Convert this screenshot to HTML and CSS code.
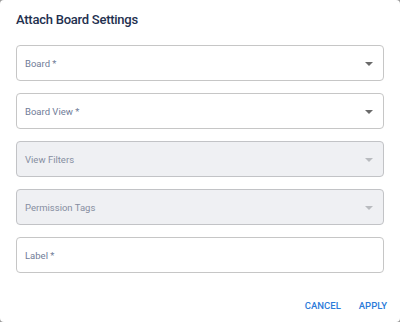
FILE: index.html
```html
<!DOCTYPE html>
<html lang="en">
<head>
  <meta charset="UTF-8">
  <meta name="viewport" content="width=device-width, initial-scale=1.0">
  <title>Attach Board Settings</title>
  <link rel="stylesheet" href="styles.css">
</head>
<body>
  <div class="dialog">
    <h2 class="title">Attach Board Settings</h2>

    <div class="fields">
      <div class="field">
        <span class="label">Board *</span>
        <span class="arrow"></span>
      </div>
      <div class="field">
        <span class="label">Board View *</span>
        <span class="arrow"></span>
      </div>
      <div class="field disabled">
        <span class="label">View Filters</span>
        <span class="arrow"></span>
      </div>
      <div class="field disabled">
        <span class="label">Permission Tags</span>
        <span class="arrow"></span>
      </div>
      <div class="field">
        <span class="label">Label *</span>
      </div>
    </div>

    <div class="actions">
      <button class="button">CANCEL</button>
      <button class="button">APPLY</button>
    </div>
  </div>
</body>
</html>
```

FILE: styles.css
```css
html, body { margin: 0; height: 100%; }
body { background: #9a9a9a; font-family: Roboto, "Liberation Sans", sans-serif; }
.dialog { box-sizing: border-box; width: 400px; height: 322px; background: #fff; border-radius: 4px; padding: 10px 16px 0; }
.title { margin: 0 0 15px; font-size: 13px; line-height: 20px; font-weight: 500; letter-spacing: -0.25px; color: #23304f; }
.fields { display: flex; flex-direction: column; gap: 12px; }
.field { box-sizing: border-box; height: 36px; border: 1px solid #c6c6c6; border-radius: 4px; display: flex; align-items: center; justify-content: space-between; padding: 0 10px 0 8px; }
.field.disabled { background: #eff0f3; border-color: #c2c3c6; }
.label { font-size: 9.5px; color: #707c97; }
.field.disabled .label { color: #868ea1; }
.arrow { width: 0; height: 0; border-left: 4px solid transparent; border-right: 4px solid transparent; border-top: 4px solid #6a6a6a; margin-top: 1px; }
.field.disabled .arrow { border-top-color: #b9bbbf; }
.actions { display: flex; justify-content: flex-end; gap: 18px; margin-top: 25px; margin-right: -3px; }
.button { background: none; border: none; padding: 0; font-family: inherit; font-size: 9.5px; font-weight: 500; line-height: 16px; color: #2b7bd9; cursor: pointer; }
```
